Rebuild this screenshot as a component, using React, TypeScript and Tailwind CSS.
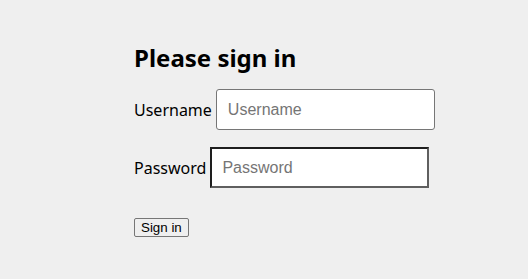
export default function App() {
  return (
    <div className="min-h-screen bg-[#efefef] pl-[134px] pt-[42px] font-['Noto_Sans',sans-serif] text-black">
      <h1 className="text-[24px] font-bold leading-[32px]">Please sign in</h1>
      <form className="mt-[15px] flex flex-col items-start" onSubmit={(e) => e.preventDefault()}>
        <div className="flex items-center gap-[4px]">
          <label htmlFor="username" className="text-[16px]">Username</label>
          <input
            id="username"
            placeholder="Username"
            className="h-[41px] w-[219px] rounded-[3px] border border-[#767676] bg-white px-[11px] font-['Liberation_Sans',Arial,sans-serif] text-[16px] placeholder:text-[#757575] outline-none"
          />
        </div>
        <div className="mt-[17px] flex items-center gap-[4px]">
          <label htmlFor="password" className="text-[16px]">Password</label>
          <input
            id="password"
            type="password"
            placeholder="Password"
            className="h-[41px] w-[219px] border-2 border-t-[#1e1e1e] border-l-[#1e1e1e] border-r-[#5f5f5f] border-b-[#5f5f5f] bg-white px-[10px] font-['Liberation_Sans',Arial,sans-serif] text-[16px] placeholder:text-[#757575] outline-none"
          />
        </div>
        <button
          type="submit"
          className="mt-[30px] h-[19px] rounded-[2px] border border-[#767676] bg-[#efefef] px-[6px] font-['Liberation_Sans',Arial,sans-serif] text-[13.33px] leading-[15px]"
        >
          Sign in
        </button>
      </form>
    </div>
  );
}
